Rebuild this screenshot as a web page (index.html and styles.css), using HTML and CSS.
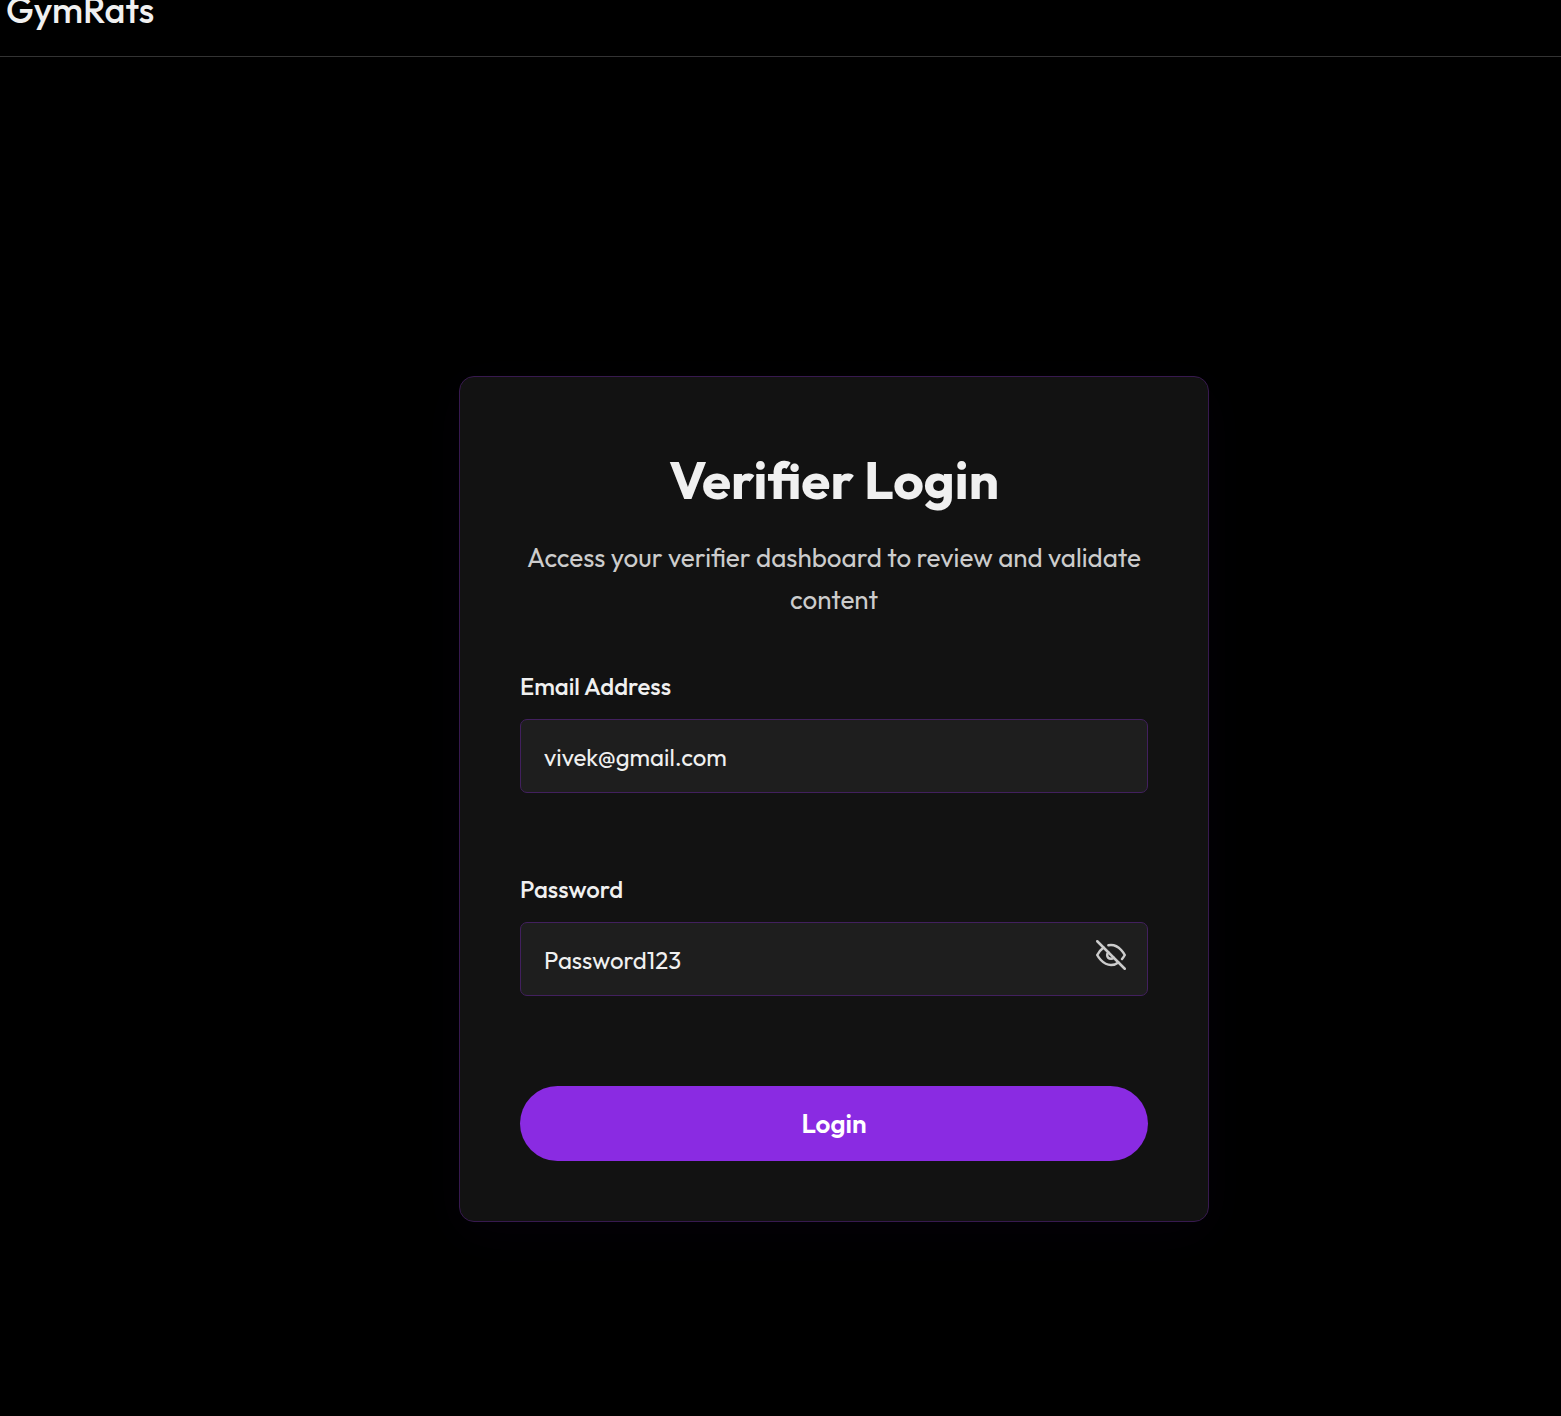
FILE: index.html
```html
<!DOCTYPE html>
<html lang="en">
<head>
<meta charset="utf-8">
<meta name="viewport" content="width=device-width, initial-scale=1">
<title>GymRats - Verifier Login</title>
<link rel="stylesheet" href="styles.css">
</head>
<body>
<header class="site-header">
  <a class="brand" href="#">GymRats</a>
</header>
<main class="page">
  <section class="card">
    <h1 class="title">Verifier Login</h1>
    <p class="subtitle">Access your verifier dashboard to review and validate content</p>
    <form class="form">
      <div class="field">
        <label class="label" for="email">Email Address</label>
        <input class="input" id="email" type="email" value="vivek@gmail.com">
      </div>
      <div class="field">
        <label class="label" for="password">Password</label>
        <div class="password-box">
          <input class="input" id="password" type="text" value="Password123">
          <button class="toggle" type="button" aria-label="Hide password">
            <svg class="toggle-icon" viewBox="0 0 24 24" aria-hidden="true">
              <path d="M17.94 17.94A10.07 10.07 0 0 1 12 20c-7 0-11-8-11-8a18.45 18.45 0 0 1 5.06-5.94M9.9 4.24A9.12 9.12 0 0 1 12 4c7 0 11 8 11 8a18.5 18.5 0 0 1-2.16 3.19m-6.72-1.07a3 3 0 1 1-4.24-4.24"/>
              <path d="M1 1l22 22"/>
            </svg>
          </button>
        </div>
      </div>
      <button class="submit" type="submit">Login</button>
    </form>
  </section>
</main>
</body>
</html>
```
FILE: styles.css
```css
* {
  box-sizing: border-box;
}

body {
  margin: 0;
  min-height: 100vh;
  display: flex;
  flex-direction: column;
  background: #000;
  color: #f0f0f0;
  font-family: Outfit, Lato, sans-serif;
}

.site-header {
  display: flex;
  align-items: flex-start;
  height: 57px;
  padding: 0 6px;
  border-bottom: 1px solid #333;
}

.brand {
  color: #f0f0f0;
  font-size: 36px;
  font-weight: 500;
  line-height: 20px;
  text-decoration: none;
}

.page {
  flex: 1;
  display: flex;
  align-items: center;
  justify-content: center;
  padding: 124px 0 0 107px;
}

.card {
  width: 100%;
  max-width: 750px;
  padding: 60px;
  background: #121212;
  border: 1px solid #37194f;
  border-radius: 15px;
  box-shadow: 0 12px 48px rgba(75, 0, 130, 0.06);
}

.title {
  margin: 0 0 14px;
  font-size: 53px;
  font-weight: 700;
  line-height: 86px;
  text-align: center;
}

.subtitle {
  margin: 0 0 48px;
  color: #ccc;
  font-size: 26px;
  line-height: 42px;
  text-align: center;
}

.form {
  display: flex;
  flex-direction: column;
}

.field {
  display: flex;
  flex-direction: column;
  gap: 16px;
}

.field + .field {
  margin-top: 79px;
}

.label {
  font-size: 24px;
  font-weight: 500;
  line-height: 34px;
}

.input {
  width: 100%;
  height: 74px;
  padding: 2px 23px 0;
  background: #1e1e1e;
  border: 1px solid #42205e;
  border-radius: 7px;
  color: #f0f0f0;
  font-family: inherit;
  font-size: 24px;
  outline: none;
}

.password-box {
  position: relative;
}

.toggle {
  position: absolute;
  top: 18px;
  right: 22px;
  display: flex;
  padding: 0;
  background: none;
  border: 0;
  color: #ccc;
  cursor: pointer;
}

.toggle-icon {
  width: 30px;
  height: 30px;
  fill: none;
  stroke: currentColor;
  stroke-width: 2;
  stroke-linecap: round;
  stroke-linejoin: round;
}

.submit {
  height: 75px;
  margin-top: 90px;
  background: #8a2be2;
  border: 0;
  border-radius: 38px;
  color: #fff;
  font-family: inherit;
  font-size: 26px;
  font-weight: 600;
  cursor: pointer;
}
```
